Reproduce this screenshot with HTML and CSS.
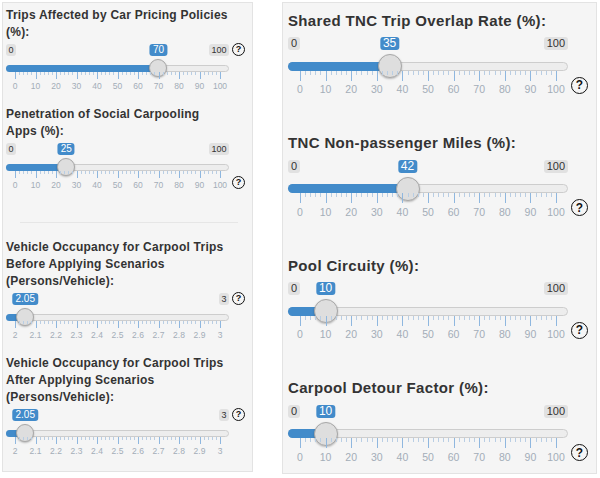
FILE: index.html
```html
<!DOCTYPE html>
<html lang="en">
<head>
    <meta charset="UTF-8">
    <title>Scenario Inputs</title>
    <link rel="stylesheet" href="styles.css">
</head>
<body>
    <div class="page">
        <div class="panel panel-sm">
            <div class="field">
                <label class="field-label">Trips Affected by Car Pricing Policies (%):</label>
                <div class="field-row">
                    <div class="irs" data-min="0" data-max="100" data-value="70"></div>
                    <span class="help">?</span>
                </div>
            </div>
            <div class="field">
                <label class="field-label">Penetration of Social Carpooling Apps (%):</label>
                <div class="field-row">
                    <div class="irs" data-min="0" data-max="100" data-value="25"></div>
                    <span class="help help-low">?</span>
                </div>
            </div>
            <hr class="divider">
            <div class="field">
                <label class="field-label">Vehicle Occupancy for Carpool Trips Before Applying Scenarios (Persons/Vehicle):</label>
                <div class="field-row">
                    <div class="irs" data-min="2" data-max="3" data-value="2.05"></div>
                    <span class="help">?</span>
                </div>
            </div>
            <div class="field">
                <label class="field-label">Vehicle Occupancy for Carpool Trips After Applying Scenarios (Persons/Vehicle):</label>
                <div class="field-row">
                    <div class="irs" data-min="2" data-max="3" data-value="2.05"></div>
                    <span class="help">?</span>
                </div>
            </div>
        </div>

        <div class="panel panel-lg">
            <div class="field">
                <label class="field-label">Shared TNC Trip Overlap Rate (%):</label>
                <div class="field-row">
                    <div class="irs" data-min="0" data-max="100" data-value="35"></div>
                    <span class="help">?</span>
                </div>
            </div>
            <div class="field">
                <label class="field-label">TNC Non-passenger Miles (%):</label>
                <div class="field-row">
                    <div class="irs" data-min="0" data-max="100" data-value="42"></div>
                    <span class="help">?</span>
                </div>
            </div>
            <div class="field">
                <label class="field-label">Pool Circuity (%):</label>
                <div class="field-row">
                    <div class="irs" data-min="0" data-max="100" data-value="10"></div>
                    <span class="help">?</span>
                </div>
            </div>
            <div class="field">
                <label class="field-label">Carpool Detour Factor (%):</label>
                <div class="field-row">
                    <div class="irs" data-min="0" data-max="100" data-value="10"></div>
                    <span class="help">?</span>
                </div>
            </div>
        </div>
    </div>

    <script>
        function fmt(v) {
            return String(parseFloat(v.toFixed(4)));
        }

        document.querySelectorAll('.irs').forEach(function (irs) {
            var min = parseFloat(irs.dataset.min);
            var max = parseFloat(irs.dataset.max);
            var value = parseFloat(irs.dataset.value);
            irs.style.setProperty('--pct', (value - min) / (max - min));

            var grid = '';
            for (var j = 0; j <= 50; j++) {
                var major = j % 5 === 0;
                grid += '<span class="tick' + (major ? ' major' : '') + '" style="left: ' + (j * 2) + '%"></span>';
                if (major) {
                    grid += '<span class="tick-label" style="left: ' + (j * 2) + '%">' +
                        fmt(min + (max - min) * j / 50) + '</span>';
                }
            }

            irs.innerHTML = `
                <div class="irs-labels">
                    <span class="irs-min">${fmt(min)}</span>
                    <span class="irs-max">${fmt(max)}</span>
                    <span class="irs-single">${irs.dataset.value}</span>
                </div>
                <div class="irs-track">
                    <div class="irs-line"><div class="irs-bar"></div></div>
                    <span class="irs-handle"></span>
                </div>
                <div class="irs-grid">${grid}</div>
            `;

            // hide the min/max tags when the value tag runs over them
            var single = irs.querySelector('.irs-single').getBoundingClientRect();
            var minTag = irs.querySelector('.irs-min');
            var maxTag = irs.querySelector('.irs-max');
            if (single.left < minTag.getBoundingClientRect().right + 2) {
                minTag.classList.add('irs-hidden');
            }
            if (single.right > maxTag.getBoundingClientRect().left - 2) {
                maxTag.classList.add('irs-hidden');
            }
        });
    </script>
</body>
</html>
```

FILE: styles.css
```css
body {
    margin: 0;
    font-family: "Liberation Sans", Arial, sans-serif;
    color: #333;
    background-color: #fff;
}
.page {
    display: flex;
    align-items: flex-start;
    padding: 2px 0 0 2px;
}
.panel {
    box-sizing: border-box;
    background-color: #f5f5f5;
    border: 1px solid #e3e3e3;
}

/* small (left) panel */
.panel-sm {
    width: 251px;
    height: 470px;
    padding: 4px 0 0 3px;
    --title-size: 12px;
    --title-ls: 0.23px;
    --title-lh: 17px;
    --title-w: 226px;
    --label-gap: 3px;
    --irs-w: 223px;
    --pad: 9px;
    --handle: 18px;
    --line: 7px;
    --tag-size: 9px;
    --single-size: 10px;
    --tag-h: 12px;
    --tag-pad: 2.5px;
    --row-gap: 3px;
    --grid-top: -5.5px;
    --grid-h: 20px;
    --major: 7px;
    --minor: 3px;
    --grid-font: 8.5px;
    --grid-label-top: 10px;
    --help: 13px;
    --help-top: -1.5px;
    --help-low: 32.5px;
    --field-gap: 14.5px;
}

/* large (right) panel */
.panel-lg {
    width: 315px;
    height: 472px;
    margin-left: 29px;
    padding: 7.5px 0 0 5px;
    --title-size: 15px;
    --title-ls: 0.35px;
    --title-lh: 20px;
    --title-w: 285px;
    --label-gap: 6.5px;
    --irs-w: 280px;
    --pad: 12px;
    --handle: 24px;
    --line: 9px;
    --tag-size: 11px;
    --single-size: 12px;
    --tag-h: 13px;
    --tag-pad: 3px;
    --row-gap: 4px;
    --grid-top: -7.5px;
    --grid-h: 25px;
    --major: 10px;
    --minor: 4px;
    --grid-font: 10.5px;
    --grid-label-top: 12.5px;
    --help: 17px;
    --help-top: 39.5px;
    --field-gap: 37.5px;
}

.field {
    margin-bottom: var(--field-gap);
}
.field-label {
    display: block;
    width: var(--title-w);
    margin-bottom: var(--label-gap);
    font-size: var(--title-size);
    line-height: var(--title-lh);
    letter-spacing: var(--title-ls);
    font-weight: bold;
}
.field-row {
    display: flex;
    align-items: flex-start;
}
.divider {
    border: 0;
    border-top: 1px solid #e6e6e6;
    margin: 31px 14px 16.5px;
}

/* slider */
.irs {
    width: var(--irs-w);
    flex-shrink: 0;
}
.irs-labels {
    position: relative;
    display: flex;
    justify-content: space-between;
    height: var(--tag-h);
}
.irs-min, .irs-max {
    padding: 0 var(--tag-pad);
    font-size: var(--tag-size);
    line-height: var(--tag-h);
    color: #333;
    background-color: #e1e1e1;
    border-radius: 3px;
}
.irs-hidden {
    visibility: hidden;
}
.irs-single {
    position: absolute;
    top: 0;
    left: calc(var(--pad) + var(--pct) * (100% - 2 * var(--pad)));
    transform: translateX(-50%);
    padding: 0 3px;
    font-size: var(--single-size);
    line-height: var(--tag-h);
    color: #fff;
    background-color: #428bca;
    border-radius: 3px;
}
.irs-track {
    position: relative;
    display: flex;
    align-items: center;
    height: var(--handle);
    margin-top: var(--row-gap);
}
.irs-line {
    position: relative;
    flex: 1;
    box-sizing: border-box;
    height: var(--line);
    background-color: #ededed;
    border: 1px solid #cdcdcd;
    border-radius: var(--line);
}
.irs-bar {
    position: absolute;
    top: -1px;
    bottom: -1px;
    left: -1px;
    width: calc(var(--pad) + var(--pct) * (100% - 2 * var(--pad)));
    background-color: #428bca;
    border-radius: var(--line) 0 0 var(--line);
}
.irs-handle {
    position: absolute;
    top: 0;
    left: calc(var(--pad) + var(--pct) * (100% - 2 * var(--pad)));
    box-sizing: border-box;
    width: var(--handle);
    height: var(--handle);
    margin-left: calc(var(--handle) / -2);
    background-color: #dedede;
    border: 1px solid #a8a8a8;
    border-radius: 50%;
    box-shadow: 0 1px 2px rgba(0, 0, 0, 0.25);
}
.irs-grid {
    position: relative;
    height: var(--grid-h);
    margin: var(--grid-top) var(--pad) 0;
}
.tick {
    position: absolute;
    top: 0;
    width: 1px;
    height: var(--minor);
    background-color: #b9cee4;
}
.tick.major {
    height: var(--major);
    background-color: #8fb7df;
}
.tick-label {
    position: absolute;
    top: var(--grid-label-top);
    transform: translateX(-50%);
    font-size: var(--grid-font);
    line-height: 1.15;
    color: #a3adb8;
}

/* help icon */
.help {
    display: flex;
    align-items: center;
    justify-content: center;
    box-sizing: border-box;
    width: var(--help);
    height: var(--help);
    margin: var(--help-top) 0 0 3px;
    border: 1.5px solid #111;
    border-radius: 50%;
    font-size: calc(var(--help) * 0.7);
    font-weight: bold;
    color: #111;
}
.help-low {
    margin-top: var(--help-low);
}
```
